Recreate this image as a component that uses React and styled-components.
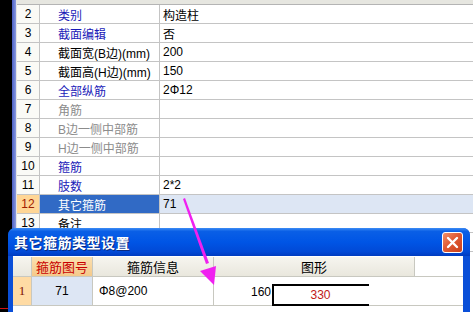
import React from "react"
import styled, { createGlobalStyle } from "styled-components"

const rows = [
    { no: 2, name: "类别", kind: "link", value: "构造柱" },
    { no: 3, name: "截面编辑", kind: "link", value: "否" },
    { no: 4, name: "截面宽(B边)(mm)", kind: "plain", value: "200" },
    { no: 5, name: "截面高(H边)(mm)", kind: "plain", value: "150" },
    { no: 6, name: "全部纵筋", kind: "link", value: "2Φ12" },
    { no: 7, name: "角筋", kind: "off", value: "" },
    { no: 8, name: "B边一侧中部筋", kind: "off", value: "" },
    { no: 9, name: "H边一侧中部筋", kind: "off", value: "" },
    { no: 10, name: "箍筋", kind: "link", value: "" },
    { no: 11, name: "肢数", kind: "link", value: "2*2" },
    { no: 12, name: "其它箍筋", kind: "link", value: "71", selected: true },
    { no: 13, name: "备注", kind: "plain", value: "" },
]

const App = () => {
    return (
        <>
            <Global />
            <Screen>
                <SideBlack>
                    <RedMark />
                </SideBlack>
                <SideBlue />
                <SideGap />
                <Grid>
                    <TopHeader />
                    {rows.map((r) => (
                        <Row key={r.no}>
                            <NumCell selected={r.selected}>{r.no}</NumCell>
                            <NameCell kind={r.kind} selected={r.selected}>{r.name}</NameCell>
                            <ValueCell selected={r.selected}>{r.value}</ValueCell>
                        </Row>
                    ))}
                    <Row>
                        <NumCell />
                        <NameCell />
                        <ValueCell />
                    </Row>
                </Grid>

                <Dialog>
                    <TitleBar>
                        <Title>其它箍筋类型设置</Title>
                        <CloseButton>
                            <svg width="13" height="13" viewBox="0 0 13 13">
                                <path d="M2 2 L11 11 M11 2 L2 11" stroke="#fff" strokeWidth="2.4" strokeLinecap="round" />
                            </svg>
                        </CloseButton>
                    </TitleBar>
                    <DialogBody>
                        <Table>
                            <HeadRow>
                                <HeadCell w={19} />
                                <HeadCell w={61} active>箍筋图号</HeadCell>
                                <HeadCell w={121}>箍筋信息</HeadCell>
                                <HeadCell w={201}>图形</HeadCell>
                            </HeadRow>
                            <BodyRow>
                                <RowNo>1</RowNo>
                                <BodyCell w={61} center shaded>71</BodyCell>
                                <BodyCell w={121}>Φ8@200</BodyCell>
                                <ShapeCell>
                                    <ShapeLabel>160</ShapeLabel>
                                    <Shape>
                                        <svg width="97" height="22" viewBox="0 0 97 22">
                                            <path d="M97 1 L1 1 L1 21 L97 21" fill="none" stroke="#000" strokeWidth="2" />
                                        </svg>
                                        <ShapeText>330</ShapeText>
                                    </Shape>
                                </ShapeCell>
                            </BodyRow>
                        </Table>
                    </DialogBody>
                </Dialog>

                <Arrow width="473" height="312" viewBox="0 0 473 312">
                    <path d="M183 199 L185 198 L209 263 L206 264 Z" fill="#F020F0" />
                    <path d="M200 271 L216 266 L214 285 Z" fill="#F020F0" />
                </Arrow>
            </Screen>
        </>
    )
}

export default App

const Global = createGlobalStyle`
    html, body {
        margin: 0;
        padding: 0;
        overflow: hidden;
        background: #fff;
    }
    body {
        font-family: "Liberation Sans", "Noto Sans CJK SC", sans-serif;
        font-size: 12px;
    }
`
const Screen = styled.div`
    position: relative;
    display: flex;
    width: 473px;
    height: 312px;
    overflow: hidden;
    background: #fff;
`
const SideBlack = styled.div`
    width: 12px;
    background: #000;
    flex-shrink: 0;
`
const RedMark = styled.div`
    margin-top: 308px;
    height: 1px;
    background: #d01010;
`
const SideBlue = styled.div`
    width: 4px;
    background: linear-gradient(to right, #4b5fc4, #8a9ae0);
    flex-shrink: 0;
`
const SideGap = styled.div`
    width: 1px;
    background: #e4e4e4;
    flex-shrink: 0;
`
const Grid = styled.div`
    flex: 1;
    display: flex;
    flex-direction: column;
`
const TopHeader = styled.div`
    height: 4px;
    flex-shrink: 0;
    background: #e6e6e0;
    border-bottom: 1px solid #b4b4b4;
`
const Row = styled.div`
    display: grid;
    grid-template-columns: 23px 120px 1fr;
    height: 19px;
    flex-shrink: 0;
    box-sizing: border-box;
    border-bottom: 1px solid #c4c4c4;
`
const NumCell = styled.div`
    display: flex;
    align-items: center;
    justify-content: center;
    border-right: 1px solid #c4c4c4;
    background: ${(p) => (p.selected ? "#ffd696" : "#fafaf6")};
    color: ${(p) => (p.selected ? "#a02000" : "#000")};
`
const nameColor = { link: "#1a1ab8", plain: "#000", off: "#8c8c8c" }
const NameCell = styled.div`
    display: flex;
    align-items: center;
    padding-left: 18px;
    border-right: 1px solid #c4c4c4;
    white-space: nowrap;
    background: ${(p) => (p.selected ? "#316ac5" : "#fff")};
    color: ${(p) => (p.selected ? "#fff" : nameColor[p.kind] || "#000")};
`
const ValueCell = styled.div`
    display: flex;
    align-items: center;
    padding-left: 3px;
    color: #000;
    background: ${(p) => (p.selected ? "#dde6f4" : "#fff")};
`
const Dialog = styled.div`
    position: absolute;
    left: 8px;
    top: 228px;
    width: 462px;
    height: 100px;
    display: flex;
    flex-direction: column;
    border-radius: 7px 7px 0 0;
    background: #0a4fd8;
    overflow: hidden;
`
const TitleBar = styled.div`
    height: 28px;
    flex-shrink: 0;
    display: flex;
    align-items: center;
    justify-content: space-between;
    padding: 0 7px 0 6px;
    background: linear-gradient(to bottom, #3d8cf5 0%, #0a5fe6 12%, #0055e5 50%, #0149d6 85%, #003bbf 100%);
`
const Title = styled.div`
    color: #fff;
    font-family: "Noto Sans CJK SC", sans-serif;
    font-weight: 700;
    font-size: 14px;
    letter-spacing: 0.5px;
    text-shadow: 1px 1px 0 #0a2a80;
`
const CloseButton = styled.div`
    width: 19px;
    height: 19px;
    display: flex;
    align-items: center;
    justify-content: center;
    border: 1px solid #fff;
    border-radius: 3px;
    background: linear-gradient(135deg, #f0906c 0%, #e05a34 45%, #c8401c 100%);
`
const DialogBody = styled.div`
    flex: 1;
    margin: 0 7px 0 5px;
    background: #fff;
`
const Table = styled.div`
    display: flex;
    flex-direction: column;
`
const HeadRow = styled.div`
    display: flex;
    height: 20px;
    margin-top: 1px;
    box-sizing: border-box;
    border-bottom: 1px solid #c8c8c0;
`
const HeadCell = styled.div`
    width: ${(p) => p.w}px;
    flex-shrink: 0;
    box-sizing: border-box;
    display: flex;
    align-items: center;
    justify-content: center;
    border-right: 1px solid #c8c8c0;
    font-size: 13px;
    color: ${(p) => (p.active ? "#c80000" : "#000")};
    background: ${(p) =>
        p.active
            ? "linear-gradient(to bottom, #fbe0b0, #f4c98a)"
            : "linear-gradient(to bottom, #f6f5ef, #e9e7dd)"};
`
const BodyRow = styled.div`
    display: flex;
    height: 29px;
    box-sizing: border-box;
    border-bottom: 1px solid #c8c8c0;
`
const RowNo = styled.div`
    width: 19px;
    flex-shrink: 0;
    box-sizing: border-box;
    display: flex;
    align-items: center;
    justify-content: center;
    border-right: 1px solid #c8c8c0;
    background: #ffdba4;
    color: #801000;
    font-family: "Liberation Serif", serif;
    font-size: 13px;
`
const BodyCell = styled.div`
    width: ${(p) => p.w}px;
    flex-shrink: 0;
    box-sizing: border-box;
    display: flex;
    align-items: center;
    justify-content: ${(p) => (p.center ? "center" : "flex-start")};
    padding-left: ${(p) => (p.center ? 0 : 6)}px;
    border-right: 1px solid #c8c8c0;
    background: ${(p) => (p.shaded ? "#dde6f4" : "#fff")};
    color: #000;
`
const ShapeCell = styled.div`
    width: 201px;
    flex-shrink: 0;
    display: flex;
    align-items: flex-end;
    padding-left: 37px;
    box-sizing: border-box;
`
const ShapeLabel = styled.div`
    width: 21px;
    margin-bottom: 6px;
    color: #000;
`
const Shape = styled.div`
    position: relative;
    width: 97px;
    height: 22px;
    margin-bottom: -1px;
    > svg {
        display: block;
    }
`
const ShapeText = styled.div`
    position: absolute;
    left: 0;
    right: 0;
    top: 4px;
    text-align: center;
    color: #c01818;
    font-size: 12px;
`
const Arrow = styled.svg`
    position: absolute;
    left: 0;
    top: 0;
    pointer-events: none;
`
